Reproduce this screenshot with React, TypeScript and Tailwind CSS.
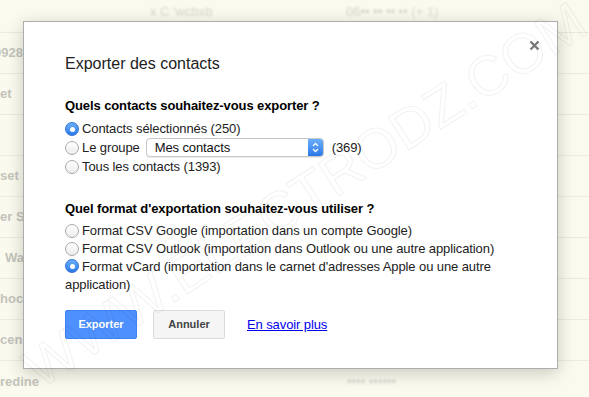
import React from "react";

const Radio = ({ checked }: { checked?: boolean }) =>
  checked ? (
    <span className="relative inline-block w-[14px] h-[14px] rounded-full bg-linear-to-b from-[#6cb0fb] to-[#2a78e8] border border-[#2f72d8] align-[-2px] mr-[3px] shrink-0">
      <span className="absolute left-[3.5px] top-[3.5px] w-[5px] h-[5px] rounded-full bg-white" />
    </span>
  ) : (
    <span className="inline-block w-[14px] h-[14px] rounded-full bg-linear-to-b from-white to-[#ededed] border border-[#a9a9a9] align-[-2px] mr-[3px] shrink-0" />
  );

const rows: { text: string; ml: string }[] = [
  { text: "0928", ml: "ml-[-6px]" },
  { text: "et", ml: "ml-[0px]" },
  { text: "", ml: "ml-[0px]" },
  { text: "set", ml: "ml-[0px]" },
  { text: "er Si", ml: "ml-[0px]" },
  { text: "Wal", ml: "ml-[5px]" },
  { text: "hoco", ml: "ml-[0px]" },
  { text: "cen", ml: "ml-[0px]" },
];

export default function App() {
  return (
    <div className="relative w-[589px] h-[397px] overflow-hidden bg-[#fafaee] font-['Liberation_Sans',Arial,sans-serif]">
      {/* background list */}
      <div className="flex flex-col">
        <div className="h-[33px] border-b border-[#ebebdf] flex items-start pt-[4px] text-[13px] leading-[16px] text-[#d6d6cd]">
          <span className="w-[150px] shrink-0" />
          <span className="w-[196px] shrink-0 blur-[1px]">x C 'wcbxb</span>
          <span className="blur-[1px]">06•• •• •• •• <span className="text-[#dcdcd4]">(+ 1)</span></span>
        </div>
        {rows.map((r, i) => (
          <div key={i} className="h-[41px] border-b border-[#ebebdf] flex items-center text-[13px] font-bold text-[#c4c4bc] whitespace-nowrap">
            <span className={r.ml}>{r.text}</span>
          </div>
        ))}
        <div className="h-[41px] flex items-center text-[13px] font-bold text-[#c4c4bc] whitespace-nowrap">
          <span className="w-[347px] shrink-0">redine</span>
          <span className="font-normal text-[#d8d8d0] blur-[1px]">•••• ••••••</span>
        </div>
      </div>

      {/* modal */}
      <div className="absolute left-[23px] top-[21px] w-[535px] bg-white border border-[#adadad] shadow-[0_4px_16px_rgba(0,0,0,0.2)] pl-[41px] pr-[41px] pt-[32px] pb-[29px] text-[13px] text-[#222] tracking-[-0.1px]">
        <svg className="absolute right-[17px] top-[18px]" width="11" height="11" viewBox="0 0 11 11">
          <path d="M1.5 1.5 L9.5 9.5 M9.5 1.5 L1.5 9.5" stroke="#7a7a7a" strokeWidth="2.4" fill="none" />
        </svg>
        <h2 className="text-[16px] leading-[20px] text-[#222] tracking-normal">Exporter des contacts</h2>

        <p className="mt-[24px] text-[13px] font-bold leading-[16px] text-black">
          Quels contacts souhaitez-vous exporter ?
        </p>
        <div className="mt-[6px] flex flex-col">
          <div className="h-[18px] flex items-center">
            <Radio checked />
            <span>Contacts sélectionnés (250)</span>
          </div>
          <div className="h-[19px] flex items-center">
            <Radio />
            <span>Le groupe</span>
            <div className="ml-[6px] w-[178px] h-[19px] rounded-[4px] border border-[#c8c8c8] bg-white shadow-[0_1px_1px_rgba(0,0,0,0.08)] flex items-center overflow-hidden">
              <span className="flex-1 pl-[8px] text-[13px] text-[#111]">Mes contacts</span>
              <span className="w-[15px] h-full bg-linear-to-b from-[#6aaefb] to-[#2a79e8] flex items-center justify-center">
                <svg width="7" height="11" viewBox="0 0 7 11">
                  <path d="M1 4 L3.5 1.5 L6 4 M1 7 L3.5 9.5 L6 7" stroke="white" strokeWidth="1.3" fill="none" />
                </svg>
              </span>
            </div>
            <span className="ml-[8px]">(369)</span>
          </div>
          <div className="h-[18px] mt-[1px] flex items-center">
            <Radio />
            <span>Tous les contacts (1393)</span>
          </div>
        </div>

        <p className="mt-[25px] text-[13px] font-bold leading-[16px] text-black">
          Quel format d'exportation souhaitez-vous utiliser ?
        </p>
        <div className="mt-[5px] leading-[18px]">
          <div className="flex items-center h-[18px]">
            <Radio />
            <span>Format CSV Google (importation dans un compte Google)</span>
          </div>
          <div className="flex items-center h-[18px]">
            <Radio />
            <span>Format CSV Outlook (importation dans Outlook ou une autre application)</span>
          </div>
          <div>
            <Radio checked />
            Format vCard (importation dans le carnet d'adresses Apple ou une autre application)
          </div>
        </div>

        <div className="mt-[16px] flex items-center tracking-normal">
          <button className="w-[72px] h-[29px] rounded-[2px] bg-[#4d90fe] border border-[#3f83f3] text-white text-[11px] font-bold">
            Exporter
          </button>
          <button className="ml-[16px] w-[72px] h-[29px] rounded-[2px] bg-[#f5f5f5] border border-[#dcdcdc] text-[#444] text-[11px] font-bold">
            Annuler
          </button>
          <a className="ml-[22px] text-[13px] text-[#0000ee] underline tracking-[-0.1px]">En savoir plus</a>
        </div>
      </div>

      {/* watermark */}
      <div className="pointer-events-none absolute left-[305px] top-[195px] -translate-x-1/2 -translate-y-1/2 -rotate-[33deg] whitespace-nowrap text-[56px] text-transparent [-webkit-text-stroke:1px_rgba(0,0,0,0.06)]">
        WWW.ELECTRODZ.COM
      </div>
    </div>
  );
}
